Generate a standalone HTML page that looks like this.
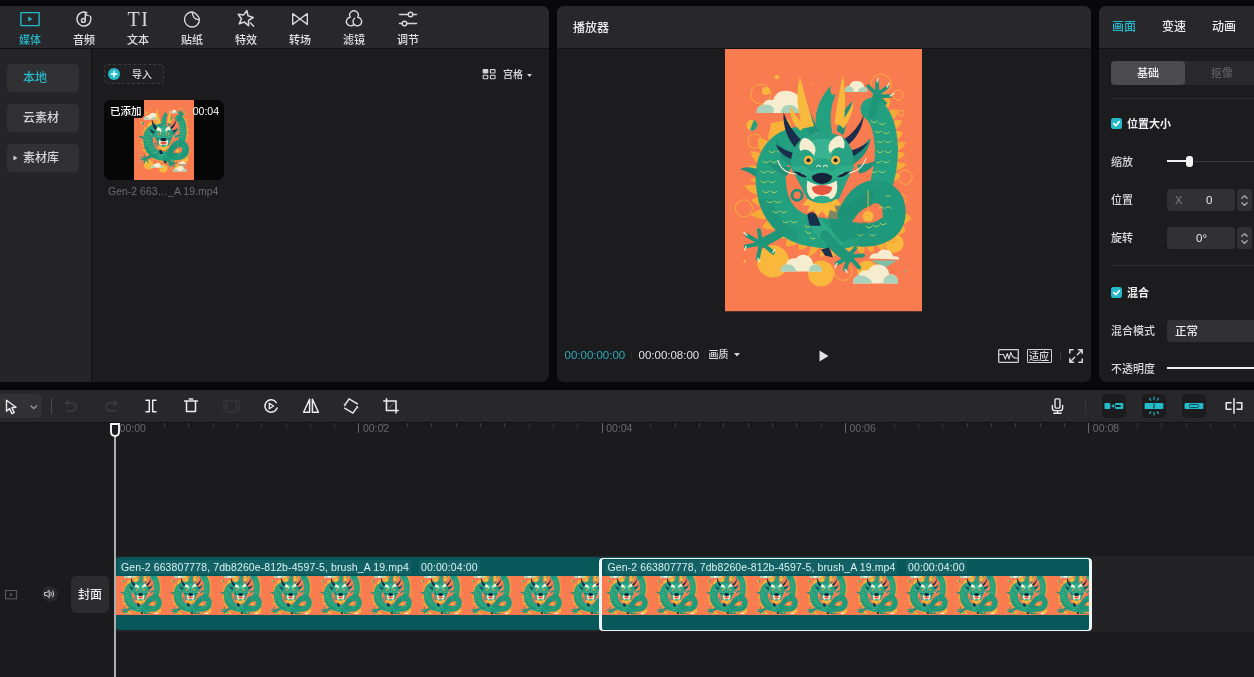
<!DOCTYPE html>
<html lang="zh-CN">
<head>
<meta charset="utf-8">
<title>剪映</title>
<style>
*{box-sizing:border-box;margin:0;padding:0}
html,body{width:1254px;height:677px;overflow:hidden;background:#08080a}
body{position:relative;font-family:"Liberation Sans","Noto Sans CJK SC",sans-serif;color:#e6e6e8;font-size:12px;font-weight:500;-webkit-font-smoothing:antialiased}
.abs{position:absolute}
.panel{position:absolute;top:6px;height:376px;background:#1c1c1e;overflow:hidden}
.phead{position:absolute;left:0;right:0;top:0;height:43px;background:#28272b;border-bottom:1px solid #111113}
svg{display:block;overflow:visible}
.ico{position:absolute;fill:none;stroke:#dcdcde;stroke-width:1.4;stroke-linecap:round;stroke-linejoin:round}
.t{position:absolute;white-space:nowrap;line-height:1}
/* left panel */
#left{left:0;width:548.700px;border-radius:0 7px 7px 0}
.tab{position:absolute;top:0;width:54px;height:42px}
.tab .lbl{position:absolute;left:0;right:0;top:28px;text-align:center;font-size:11px;line-height:12px;color:#e0e0e2}
.tab svg{position:absolute;left:16px;top:2px;width:22px;height:22px;fill:none;stroke:#d8d8da;stroke-width:1.4;stroke-linecap:round;stroke-linejoin:round}
.tab.on .lbl{color:#25b9c9}
.tab.on svg{stroke:#25b9c9}
#side{position:absolute;left:0;top:43px;width:92px;bottom:0;background:#252527;border-right:1px solid #111113}
.sbtn{position:absolute;left:7px;width:72px;height:28px;border-radius:5px;background:#313134;font-size:12px;line-height:29px;color:#d6d6d8;text-align:center}
/* player */
#player{left:556.500px;width:534.200px;border-radius:7px}
/* right */
#right{left:1099px;width:160px;border-radius:7px 0 0 7px}
.rl{position:absolute;left:12px;font-size:11px;line-height:14px;color:#dadadc;white-space:nowrap}
.inp{position:absolute;background:#313135;border-radius:4px}
.chk{position:absolute;left:12px;width:11px;height:11px;border-radius:2.5px;background:#25b9c9}
.chk svg{width:11px;height:11px;fill:none;stroke:#fff;stroke-width:1.6;stroke-linecap:round;stroke-linejoin:round}
/* timeline */
#tbar{position:absolute;z-index:2;left:0;top:390px;width:1254px;height:33px;background:#28272b;border-bottom:1px solid #121214}
#tl{position:absolute;left:0;top:422px;width:1254px;height:255px;background:#1b1b1d;overflow:hidden}
.tick{position:absolute;top:1px;width:1px;height:4px;background:#3c3c40}
.maj{position:absolute;top:1px;width:1px;height:10px;background:#6a6a6e}
.rt{position:absolute;top:0px;font-size:10.5px;line-height:12px;color:#68686c}
.clip{position:absolute;top:135px;height:73px;background:#08575b;overflow:hidden}
.clbl{position:absolute;top:3px;height:14px;line-height:14.5px;font-size:10.5px;letter-spacing:.1px;color:#d8f2f2;background:#136165;padding:0 2px;white-space:nowrap;border-radius:1.5px}
.strip{position:absolute;left:0;right:0;top:19px;height:38.500px;background:#f57a4e}
</style>
</head>
<body>
<div id="root" style="position:absolute;left:0;top:0;width:1254px;height:677px;will-change:transform">
<svg width="0" height="0" style="position:absolute">
<defs>
<symbol id="dragon" viewBox="0 0 197 262" preserveAspectRatio="xMidYMid slice">
<rect width="197" height="262" fill="#f87c50"/>
<!-- thin rings -->
<g fill="none" stroke="#f7b43c" stroke-width="0.9">
<circle cx="36" cy="45" r="10"/><circle cx="156" cy="35" r="10"/><circle cx="173" cy="46" r="5"/><circle cx="176" cy="64" r="3"/>
<circle cx="19" cy="159" r="8.5"/><circle cx="30" cy="92" r="7"/><circle cx="180" cy="128" r="7"/><circle cx="118" cy="222" r="9"/><circle cx="176" cy="150" r="5"/>
</g>
<!-- yellow discs -->
<g fill="#f9b83c">
<circle cx="41" cy="42" r="4"/><circle cx="52" cy="28" r="2.4"/><circle cx="27" cy="76" r="5.5"/>
<circle cx="48" cy="212" r="16"/><circle cx="96" cy="224" r="13"/><circle cx="169" cy="194" r="9.5"/><circle cx="142" cy="221" r="10"/>
<circle cx="20" cy="212" r="1.3"/><circle cx="88" cy="35" r="0.8"/>
</g>
<path d="M21.500 76 A5.500 5.500 0 0 0 32.500 76Z" fill="#2a9f80" transform="rotate(-70 27 76)"/>
<!-- yellow mane behind body -->
<path d="M67.1 78.4 Q66.1 72.3 61.4 70.3 Q54.1 77.9 56.6 82.4Z M54.5 83.6 Q51.8 78.4 45.8 79.2 Q41.0 89.0 44.8 92.1Z M44.0 93.1 Q38.8 88.4 33.1 89.3 Q32.7 101.3 38.0 103.5Z M37.5 104.9 Q30.5 101.8 25.5 102.1 Q28.8 113.2 34.9 114.3Z M34.4 117.1 Q27.3 115.6 22.8 116.6 Q27.8 126.0 33.8 126.1Z M33.8 128.9 Q27.9 128.5 25.0 130.9 Q29.0 133.1 34.0 132.9Z M34.2 135.5 Q25.3 135.6 19.4 136.5 Q28.5 146.7 35.4 145.4Z M35.8 147.1 Q29.4 147.9 26.6 151.0 Q33.3 157.9 38.3 156.1Z M39.3 158.6 Q30.5 161.6 24.9 165.2 Q38.2 172.6 44.5 168.6Z M45.1 169.6 Q38.9 173.1 37.3 178.1 Q48.3 182.5 52.4 178.3Z M53.4 179.2 Q49.1 183.1 51.2 188.4 Q61.1 190.9 63.5 186.6Z M63.6 186.7 Q59.9 192.3 61.5 197.3 Q72.7 196.8 74.5 191.5Z M74.9 191.7 Q72.6 197.2 74.4 200.9 Q83.1 199.0 84.0 194.0Z M86.5 194.4 Q84.7 203.0 82.4 208.3 Q93.9 202.5 94.9 195.6Z M96.7 195.8 Q95.2 203.5 94.9 208.4 Q104.6 203.0 105.1 196.7Z M107.3 196.8 Q106.3 203.8 107.3 207.8 Q116.2 203.1 116.5 197.4Z M117.4 197.4 Q116.6 203.1 118.6 206.0 Q125.8 202.8 126.1 197.9Z" fill="#f6ad38"/>
<path d="M156.0 52.0 Q159.8 47.7 164.8 49.4 Q165.9 57.5 161.6 59.8Z M162.8 62.2 Q168.4 59.1 172.8 61.1 Q171.3 70.0 166.3 71.5Z M166.5 72.3 Q172.9 70.1 177.1 71.3 Q173.9 79.7 168.3 80.7Z M168.6 82.4 Q174.4 81.1 177.7 83.5 Q174.6 90.8 169.6 91.1Z M169.7 92.5 Q176.8 91.7 181.0 93.8 Q175.7 102.2 169.9 102.1Z M169.9 102.6 Q176.6 102.4 180.3 104.3 Q174.9 111.3 169.4 110.7Z M169.2 112.6 Q176.8 113.1 181.2 115.2 Q174.0 122.6 167.8 121.4Z M167.6 122.6 Q173.4 123.4 175.6 127.1 Q170.1 133.2 165.3 131.8Z" fill="#f6ad38"/>
<path d="M122.5 194.4 Q121.9 199.1 127.3 201.7 Q131.4 199.7 131.6 195.5Z M131.7 195.5 Q131.6 201.9 137.6 205.5 Q140.0 201.0 139.7 195.6Z M141.1 195.5 Q141.8 201.2 147.6 203.3 Q149.6 199.3 148.7 194.5Z M150.7 194.1 Q152.5 200.0 159.1 201.4 Q160.2 196.5 158.1 191.7Z M160.4 190.6 Q163.3 195.7 171.4 194.2 Q172.5 188.1 168.9 184.5Z M169.4 184.0 Q173.4 187.4 180.1 182.4 Q179.8 176.1 175.5 174.4Z M175.6 174.1 Q181.3 175.8 186.1 168.7 Q182.6 163.9 177.5 163.8Z" fill="#f6ad38"/>

<path d="M46 74 L64 70 L70 92 L44 96Z" fill="#f8b23a"/>
<!-- clouds back -->
<g id="cl1">
<path d="M32 64 Q31 57 38 56 Q40 49 48 51 Q52 40 64 42 Q76 44 76 56 Q80 58 78 64Z" fill="#f6edd0"/>
<path d="M32 64 Q31 57 38 56 Q44 54 48 58 Q50 62 48 64Z" fill="#a9d2bd"/>
<path d="M56 64 Q56 57 63 56 Q70 55 72 60 Q76 60 76 64Z" fill="#a9d2bd"/>
</g>
<path d="M120 43 Q119 38 124 37 Q126 31 133 32 Q139 33 139 38 Q143 38 142 43Z" fill="#f6edd0"/>
<path d="M120 43 Q119 38 124 37 Q129 38 129 43Z M133 43 Q133 39 138 38 Q143 38 142 43Z" fill="#a9d2bd"/>
<!-- right upper body arc + arm -->
<g fill="none" stroke-linecap="round" stroke-linejoin="round">
<path d="M147 60 C160 68 166 100 157 132" stroke="#23a07f" stroke-width="23"/>
<path d="M147 66 C150 58 151 52 152 44" stroke="#1f967a" stroke-width="8"/>
<path d="M152 46 L143 37 M152 45 L152 33 M153 45 L162 38 M153 47 L165 47 M152 47 L160 54" stroke="#1f967a" stroke-width="3.600"/>
<path d="M162 38 L164 34 M165 47 L169 44 M152 33 L153 29" stroke="#f6edd0" stroke-width="1.200"/>
</g>
<!-- lower right loop -->
<g fill="none" stroke-linecap="round" stroke-linejoin="round">
<path d="M118 184 C146 189 169 184 169 163 C169 146 156 141 146 143 C138 145 130 152 124 166" stroke="#1f997b" stroke-width="23"/>
<path d="M46 132 C47 160 62 180 92 183 C104 185 112 185 120 184" stroke="#23a07f" stroke-width="30"/>
<path d="M78 92 C56 94 44 108 46 134" stroke="#23a07f" stroke-width="30"/>
</g>
<!-- body shading -->
<path d="M100 160 L132 150 L150 140 L140 186 L112 194 Z" fill="#1a8c72" opacity=".55"/>
<path d="M96 170 L120 196 L100 196 L84 176Z" fill="#34b08c" opacity=".6"/>
<path d="M33 120 Q22 116 15 120 Q24 122 31 128Z" fill="#1f917a"/>
<path d="M47 150 Q52 172 74 182 L70 192 Q42 180 33 150Z" fill="#1c8f74" opacity=".5"/>
<!-- teardrop hole + lantern -->
<path d="M127 173 Q136 157 148 157 Q158 159 158 168 Q150 174 127 173Z" fill="#f87c50"/>
<path d="M143 141 V163" stroke="#f6b63a" stroke-width="0.9"/>
<circle cx="143" cy="167" r="5.500" fill="#f9b83c"/>
<!-- scales -->
<g fill="none" stroke="#b9d35b" stroke-width="0.9" stroke-linecap="round">
<path d="M38 112 q3 3 6 0 m2 0 q3 3 6 0 M36 122 q3 3 6 0 m2 0 q3 3 6 0 m2 0 q3 3 6 0 M36 132 q3 3 6 0 m2 0 q3 3 6 0 M38 142 q3 3 6 0 m2 0 q3 3 6 0 M42 152 q3 3 6 0 m2 0 q3 3 6 0 M48 162 q3 3 6 0 m2 0 q3 3 6 0 M58 172 q3 3 6 0 m2 0 q3 3 6 0 M44 102 q3 3 6 0 m2 0 q3 3 6 0 M80 176 q2 4 5 1 m-4 5 q2 4 5 1 m-1 5 q2 3 5 1"/>
<path transform="translate(-6 0)" d="M152 72 q3 3 6 0 m2 2 q3 3 6 0 M156 82 q3 3 6 0 m2 1 q3 3 6 0 M158 92 q3 3 6 0 m2 0 q3 3 6 0 M158 102 q3 3 6 0 m2 0 q3 3 6 0 M156 112 q3 3 6 0 m2 0 q3 3 6 0 M152 122 q3 3 6 0 m2 0 q3 3 6 0"/>
<path transform="translate(-7 -1)" d="M160 160 q3 -3 6 0 m1 0 q3 -3 6 0 M148 178 q3 3 6 0 m1 -1 q3 3 6 0 m1 -2 q3 3 6 0 M140 186 q2 3 5 0 M152 186 q2 3 5 0 M168 148 q2 -2 4 0"/>
</g>
<!-- legs -->
<g fill="none" stroke="#1f967a" stroke-linecap="round" stroke-linejoin="round">
<path d="M62 180 C52 186 44 190 36 194" stroke-width="9"/>
<path d="M36 194 L22 186 M36 194 L21 197 M36 195 L33 209 M37 194 L48 203 M36 193 L34 181" stroke-width="4"/>
<path d="M100 186 C108 196 116 204 124 208" stroke-width="10"/>
<path d="M124 208 L112 214 M124 208 L120 220 M125 208 L134 218 M125 207 L138 206 M124 207 L130 199" stroke-width="4"/>
</g>
<g stroke="#f6edd0" stroke-width="1.300" stroke-linecap="round"><path d="M22 186 L19 183 M21 197 L20 201 M33 209 L35 212 M48 203 L50 200 M112 214 L110 218 M120 220 L122 223"/></g>
<path d="M96 200 L104 198 L108 208 L100 206Z" fill="#18304c"/>
<!-- front clouds -->
<path d="M56 222 Q55 216 61 215 Q63 208 71 209 Q76 203 84 207 Q88 210 88 215 Q96 214 97 222Z" fill="#f6edd0"/>
<path d="M56 222 Q55 216 61 215 Q68 214 72 222Z M84 222 Q84 216 90 215 Q97 215 97 222Z" fill="#a9d2bd"/>
<path d="M144 209 Q146 203 152 204 Q156 198 164 201 Q168 204 168 207 Q174 206 174 210Z" fill="#f6edd0"/>
<path d="M146 211 L172 211 L160 218Z" fill="#7fbfa8"/>
<path d="M128 234 Q127 228 133 226 Q136 220 143 221 Q148 213 158 216 Q164 219 164 225 Q173 224 173 234Z" fill="#f6edd0"/>
<path d="M128 234 Q127 228 133 226 Q142 225 148 234Z M158 234 Q158 226 165 225 Q173 225 173 234Z" fill="#a9d2bd"/>
<g transform="translate(97 120) scale(1.130) translate(-97 -120)">
<!-- HEAD -->
<!-- green mane tufts -->
<path d="M92 88 Q88 64 105 46 Q103 56 109 54 Q102 70 106 88Z" fill="#23a07f"/>
<path d="M86 90 Q78 74 82 58 Q86 70 94 86Z M110 86 Q112 70 124 60 Q120 74 116 90Z" fill="#1f917a"/>
<path d="M70 118 Q58 110 56 94 Q64 104 74 106Z M124 116 Q138 108 140 92 Q132 102 122 104Z M66 126 Q56 124 50 114 Q60 118 70 118Z M130 124 Q140 122 146 112 Q136 116 128 116Z" fill="#1f917a"/>
<!-- navy fins -->
<path d="M76 104 Q62 90 63 70 Q68 84 80 96Z M118 100 Q132 90 134 72 Q128 86 116 94Z" fill="#1b2d4d"/>
<path d="M72 112 Q60 108 56 98 Q64 104 74 106Z M122 110 Q134 104 138 96 Q130 102 120 104Z" fill="#1b2d4d"/>
<!-- horns -->
<path d="M80 84 Q72 58 77.500 38 Q82 56 90 82Z M108 80 Q111 56 115.600 37 Q119 58 116 82Z" fill="#f8b93d"/>
<path d="M78 86 Q68 78 69 64 Q74 74 82 82Z M116 84 Q124 74 125 60 Q120 72 112 80Z" fill="#f8b93d"/>
<!-- face -->
<path d="M78 94 Q97 82 116 92 Q128 104 124 120 Q118 132 112 146 Q97 154 84 146 Q76 130 70 120 Q68 104 78 94Z" fill="#27a283"/>
<path d="M84 96 Q97 90 110 96 L104 112 Q97 108 90 112Z" fill="#38b291"/>
<!-- brows -->
<path d="M78 96 Q80 90 86 94 Q94 100 90 108 Q84 100 78 104 Q76 100 78 96Z M116 94 Q114 88 108 92 Q100 98 104 106 Q110 98 116 102 Q118 98 116 94Z" fill="#f6edd0"/>
<!-- eyes -->
<circle cx="85" cy="112" r="4" fill="#f8b93d"/><circle cx="85" cy="112" r="1.800" fill="#18243c"/>
<circle cx="109" cy="112" r="4" fill="#f8b93d"/><circle cx="109" cy="112" r="1.800" fill="#18243c"/>
<!-- cheeks/whisker outline -->
<path d="M70 118 Q80 114 88 122 Q97 118 106 122 Q114 114 126 118 Q120 126 112 128 L84 128 Q76 126 70 118Z" fill="#2fae8c"/>
<path d="M58 112 Q62 126 80 124 M136 110 Q132 124 114 124" fill="none" stroke="#f6edd0" stroke-width="1"/>
<path d="M92 118 q2 -3 4 0 m2 0 q2 -3 4 0" fill="none" stroke="#f6edd0" stroke-width="1"/>
<!-- nose -->
<path d="M88 126 Q97 120 106 126 Q106 132 97 133 Q88 132 88 126Z" fill="#16233b"/>
<path d="M72 122 Q78 122 84 127 Q78 128 72 122Z M122 122 Q116 122 110 127 Q116 128 122 122Z" fill="#16233b"/>
<!-- mouth -->
<path d="M84 130 Q97 138 110 130 Q112 142 106 146 Q97 148 88 146 Q82 142 84 130Z" fill="#f6edd0"/>
<path d="M88 136 Q97 132 106 136 Q106 142 97 143 Q88 142 88 136Z" fill="#e8553e"/>
<path d="M90 145 Q97 142 104 145 L102 152 Q97 154 92 152Z" fill="#2fae8c"/>
<!-- beard -->
<path d="M84 146 L80 152 L86 152 L84 158 L90 156 L92 163 L97 157 L102 163 L104 156 L110 158 L108 152 L114 152 L110 146 Q97 154 84 146Z" fill="#f8b93d"/>
<path d="M84 160 Q88 156 92 160 L96 170 L86 170Z" fill="#18304c"/>
<circle cx="75" cy="143" r="4.500" fill="none" stroke="#1f917a" stroke-width="2.500"/>
</g>
<circle cx="180" cy="222" r="0.900" fill="#7fbfa8"/>
</symbol>
</defs>
</svg>

<svg class="abs" style="left:725px;top:49px;z-index:5" width="197" height="262.500" preserveAspectRatio="none"><use href="#dragon"/></svg>

<!-- ============ LEFT PANEL ============ -->
<div class="panel" id="left">
  <div class="phead" id="tabs">
    <div class="tab on" style="left:3px"><svg viewBox="0 0 22 22"><rect x="1.900" y="4.600" width="18.200" height="13" stroke-width="1.400"/><path d="M9.300 8.600 L13.400 11 L9.300 13.400Z" fill="#25b9c9" stroke="none"/></svg><div class="lbl">媒体</div></div>
    <div class="tab" style="left:57px"><svg viewBox="0 0 22 22"><path d="M13.800 4.600 A7 7 0 1 0 17.400 8.200"/><circle cx="10.400" cy="12.400" r="1.900"/><path d="M12.300 12.400 V5.400 Q13.200 7.400 15.400 7.600"/></svg><div class="lbl">音频</div></div>
    <div class="tab" style="left:111px"><div class="t" style="left:0;width:54px;top:3px;text-align:center;font-family:'Liberation Serif',serif;font-size:20px;line-height:20px;letter-spacing:1.500px;color:#d8d8da;text-indent:1px">TI</div><div class="lbl">文本</div></div>
    <div class="tab" style="left:165px"><svg viewBox="0 0 22 22"><path d="M11.500 4 A7.600 7.600 0 1 0 18.600 11.200 Z" stroke="none"/><path d="M11.400 4 A7.500 7.500 0 1 0 18.500 11.600 C14 12 11 8.500 11.400 4 C14 4.500 18 8 18.500 11.600"/></svg><div class="lbl">贴纸</div></div>
    <div class="tab" style="left:219px"><svg viewBox="0 0 22 22"><path d="M10.300 3.200 L12.300 7.600 L17.100 8.100 L13.600 11.400 L14.600 16.100 L10.300 13.700 L6.100 16.100 L7.100 11.400 L3.500 8.100 L8.300 7.600Z" transform="rotate(12 10.300 10) translate(10.300 10) scale(1.120) translate(-10.300 -10)"/><path d="M15.600 15 L18.600 18.200"/></svg><div class="lbl">特效</div></div>
    <div class="tab" style="left:273px"><svg viewBox="0 0 22 22"><path d="M3.700 5.600 L11 11 L3.700 16.400Z M18.300 5.600 L11 11 L18.300 16.400Z"/></svg><div class="lbl">转场</div></div>
    <div class="tab" style="left:327px"><svg viewBox="0 0 22 22"><path d="M7.300 9.300 A4.300 4.300 0 1 1 14.700 9.300 A4.300 4.300 0 1 1 11 16.300 A4.300 4.300 0 1 1 7.300 9.300 M11 16.300 A4.300 4.300 0 0 1 11.600 10.200"/></svg><div class="lbl">滤镜</div></div>
    <div class="tab" style="left:381px"><svg viewBox="0 0 22 22"><path d="M2.500 6.500 H11.200 M15.800 6.500 H19.500 M2.500 15.500 H5.200 M9.800 15.500 H19.500"/><circle cx="13.500" cy="6.500" r="2.300"/><circle cx="7.500" cy="15.500" r="2.300"/></svg><div class="lbl">调节</div></div>
  </div>
  <div id="side">
    <div class="sbtn" style="top:15px;color:#25b9c9;padding-right:16px">本地</div>
    <div class="sbtn" style="top:55px;padding-right:4px">云素材</div>
    <div class="sbtn" style="top:95px;padding-right:4px">素材库<svg style="position:absolute;left:6px;top:11px" width="5" height="6" viewBox="0 0 5 6"><path d="M0.500 0.500 L4.500 3 L0.500 5.500Z" fill="#d0d0d2"/></svg></div>
  </div>
  <div id="media">
    <div class="abs" style="left:104px;top:58px;width:60px;height:20px;border:1px dashed #3a3a3e;border-radius:4px;background:#202022"></div>
    <svg class="abs" style="left:108px;top:62px" width="12" height="12" viewBox="0 0 12 12"><circle cx="6" cy="6" r="6" fill="#25b9c9"/><path d="M6 3.200 V8.800 M3.200 6 H8.800" stroke="#fff" stroke-width="1.400" stroke-linecap="round"/></svg>
    <div class="t" style="left:132px;top:63.500px;font-size:10px;color:#dcdcde">导入</div>
    <svg class="abs" style="left:482px;top:63px" width="14.600" height="10.500" viewBox="0 0 14 11" fill="none" stroke="#d4d4d6" stroke-width="1.200"><rect x="0.600" y="0.600" width="4.800" height="3.600" rx="0.600" fill="#d4d4d6"/><rect x="8.200" y="0.600" width="4.800" height="3.600" rx="0.600"/><rect x="0.600" y="6.600" width="4.800" height="3.600" rx="0.600"/><rect x="8.200" y="6.600" width="4.800" height="3.600" rx="0.600"/></svg>
    <div class="t" style="left:503px;top:64px;font-size:10px;color:#dcdcde">宫格</div>
    <svg class="abs" style="left:527px;top:67.500px" width="5" height="3.300" viewBox="0 0 6 4"><path d="M0 0 H6 L3 3.500Z" fill="#d0d0d2"/></svg>
    <div class="abs" style="left:104px;top:94px;width:120px;height:80px;border-radius:7px;background:#060607;overflow:hidden">
      <svg class="abs" style="left:30px;top:0" width="60" height="80"><use href="#dragon" width="60" height="80"/></svg>
      <div class="abs" style="left:0;top:0;width:39.500px;height:17.500px;background:#0a0a0b;border-radius:0 0 4px 0"></div>
      <div class="t" style="left:6px;top:5.500px;font-size:10.500px;color:#fff">已添加</div>
      <div class="t" style="right:5px;top:6px;font-size:10.500px;color:#fff">00:04</div>
    </div>
    <div class="t" style="left:108px;top:180px;font-size:10.500px;color:#6a6a6e">Gen-2 663…_A 19.mp4</div>
  </div>
</div>

<!-- ============ PLAYER ============ -->
<div class="panel" id="player">
  <div class="phead"><div class="t" style="left:16.500px;top:16px;font-size:12px;color:#ececee">播放器</div></div>
  <div class="t" style="left:8px;top:344px;font-size:11.500px;color:#25aab9">00:00:00:00</div>
  <div class="abs" style="left:74px;top:344px;width:1px;height:12px;background:#29292c"></div>
  <div class="t" style="left:82px;top:344px;font-size:11.500px;color:#e2e2e4">00:00:08:00</div>
  <div class="abs" style="left:147px;top:344px;width:1px;height:12px;background:#29292c"></div>
  <div class="t" style="left:152px;top:344px;font-size:10px;color:#dedee0">画质</div>
  <svg class="abs" style="left:177px;top:347px" width="6" height="4" viewBox="0 0 6 4"><path d="M0 0 H6 L3 3.500Z" fill="#d6d6d8"/></svg>
  <svg class="abs" style="left:262px;top:344px" width="10" height="12" viewBox="0 0 10 12"><path d="M0.500 0.500 L9.500 6 L0.500 11.500Z" fill="#e2e2e4"/></svg>
  <svg class="abs" style="left:441px;top:343px" width="21" height="14" viewBox="0 0 21 14" fill="none" stroke="#d2d2d4" stroke-width="1.300" stroke-linejoin="round"><rect x="0.700" y="0.700" width="19.600" height="12.600" rx="0.500"/><path d="M1 5.500 H5.500 L7.300 10 L9.300 4.500 L11 10 L12.800 3.500 L14.500 7.500 Q16.500 9.500 20 9.200" stroke-width="1.100"/></svg>
  <div class="abs" style="left:470px;top:343px;width:25px;height:14px;border:1.300px solid #d2d2d4;border-radius:1px"></div>
  <div class="t" style="left:472.500px;top:346px;font-size:10px;color:#e0e0e2;font-weight:500">适应</div>
  <div class="abs" style="left:503px;top:346px;width:1px;height:9px;background:#3a3a3d"></div>
  <svg class="abs" style="left:512px;top:343px" width="14" height="14" viewBox="0 0 14 14" fill="none" stroke="#d6d6d8" stroke-width="1.500" stroke-linecap="round" stroke-linejoin="round"><path d="M0.800 4 V0.800 H4 M0.800 9.500 V13.200 H4.500 M13.200 10 V13.200 H10 M9.500 0.800 H13.200 V4.500 M13.200 0.800 L8.300 5.700 M0.800 13.200 L5.700 8.300" /></svg>
</div>

<!-- ============ RIGHT PANEL ============ -->
<div class="panel" id="right">
  <div class="phead">
    <div class="t" style="left:13px;top:15px;font-size:12px;color:#25b9c9">画面</div>
    <div class="t" style="left:63px;top:15px;font-size:12px;color:#ececee">变速</div>
    <div class="t" style="left:113px;top:15px;font-size:12px;color:#ececee">动画</div>
  </div>
  <div class="abs" style="left:12px;top:55px;width:148px;height:24px;border-radius:4px;background:#29292c"></div>
  <div class="abs" style="left:12px;top:55px;width:74px;height:24px;border-radius:4px;background:#4b4b4f"></div>
  <div class="t" style="left:12px;width:74px;text-align:center;top:62px;font-size:11px;color:#f0f0f2">基础</div>
  <div class="t" style="left:86px;width:74px;text-align:center;top:62px;font-size:11px;color:#5e5e62">抠像</div>
  <div class="abs" style="left:12px;top:92px;width:148px;height:1px;background:#2e2e31"></div>
  <div class="chk" style="top:112px"><svg viewBox="0 0 11 11"><path d="M2.800 5.600 L4.800 7.600 L8.300 3.600"/></svg></div>
  <div class="t" style="left:28px;top:113px;font-size:11px;font-weight:700;color:#f0f0f2">位置大小</div>
  <div class="rl" style="top:149px">缩放</div>
  <div class="abs" style="left:68px;top:154.500px;width:92px;height:1.500px;background:#3a3a3e"></div>
  <div class="abs" style="left:68px;top:154px;width:22px;height:2px;background:#f0f0f2"></div>
  <div class="abs" style="left:86.500px;top:149.500px;width:7px;height:11px;border-radius:3px;background:#f2f2f4"></div>
  <div class="rl" style="top:187px">位置</div>
  <div class="inp" style="left:68px;top:183px;width:68px;height:22px"></div>
  <div class="t" style="left:76px;top:189px;font-size:11px;color:#808085">X</div>
  <div class="t" style="left:107px;top:189px;font-size:11.500px;color:#e8e8ea">0</div>
  <div class="inp" style="left:138px;top:183px;width:15px;height:22px;border-radius:3px"></div>
  <svg class="abs" style="left:142px;top:187.500px" width="7" height="13" viewBox="0 0 7 13" fill="none" stroke="#b4b4b8" stroke-width="1.250" stroke-linecap="round" stroke-linejoin="round"><path d="M0.800 4.200 L3.500 1.600 L6.200 4.200 M0.800 8.800 L3.500 11.400 L6.200 8.800"/></svg>
  <div class="rl" style="top:225px">旋转</div>
  <div class="inp" style="left:68px;top:221px;width:68px;height:22px"></div>
  <div class="t" style="left:97px;top:227px;font-size:11.500px;color:#e8e8ea">0°</div>
  <div class="inp" style="left:138px;top:221px;width:15px;height:22px;border-radius:3px"></div>
  <svg class="abs" style="left:142px;top:225.500px" width="7" height="13" viewBox="0 0 7 13" fill="none" stroke="#b4b4b8" stroke-width="1.250" stroke-linecap="round" stroke-linejoin="round"><path d="M0.800 4.200 L3.500 1.600 L6.200 4.200 M0.800 8.800 L3.500 11.400 L6.200 8.800"/></svg>
  <div class="abs" style="left:12px;top:259px;width:148px;height:1px;background:#2e2e31"></div>
  <div class="chk" style="top:281px"><svg viewBox="0 0 11 11"><path d="M2.800 5.600 L4.800 7.600 L8.300 3.600"/></svg></div>
  <div class="t" style="left:28px;top:282px;font-size:11px;font-weight:700;color:#f0f0f2">混合</div>
  <div class="rl" style="top:318px">混合模式</div>
  <div class="inp" style="left:68px;top:314px;width:100px;height:22px"></div>
  <div class="t" style="left:76px;top:320px;font-size:11.500px;color:#e8e8ea">正常</div>
  <div class="rl" style="top:356px">不透明度</div>
  <div class="abs" style="left:68px;top:361px;width:100px;height:2px;background:#f0f0f2"></div>
</div>

<!-- ============ TIMELINE ============ -->
<div id="tbar">
  <div class="abs" style="left:-4px;top:4px;width:46px;height:24px;border-radius:5px;background:#323235"></div>
  <svg class="abs" style="left:4.500px;top:8.500px" width="14" height="16" viewBox="0 0 14 16" fill="none" stroke="#ececee" stroke-width="1.500" stroke-linecap="round" stroke-linejoin="round" stroke-width="1.400"><path d="M1.500 1.200 L1.500 12.200 L4.600 9.600 L6.900 14.600 L9.200 13.600 L6.900 8.700 L11 8.300 Z" stroke-width="1.400"/></svg>
  <svg class="abs" style="left:30px;top:14.500px" width="7.500" height="5" viewBox="0 0 9 6" fill="none" stroke="#a2a2a6" stroke-width="1.500" stroke-linecap="round" stroke-linejoin="round"><path d="M1.200 1.200 L4.500 4.400 L7.800 1.200"/></svg>
  <div class="abs" style="left:51px;top:8px;width:1px;height:16px;background:#48484c"></div>
  <svg class="abs" style="left:64px;top:9px" width="14" height="14" viewBox="0 0 14 14" fill="none" stroke="#3d3d41" stroke-width="1.500" stroke-linecap="round" stroke-linejoin="round"><path d="M3.800 1.800 L1.500 4.200 L3.800 6.600 M1.800 4.200 H8.400 A3.800 3.800 0 0 1 8.400 11.800 H2.500"/></svg>
  <svg class="abs" style="left:104px;top:9px" width="14" height="14" viewBox="0 0 14 14" fill="none" stroke="#3d3d41" stroke-width="1.500" stroke-linecap="round" stroke-linejoin="round"><path d="M10.200 1.800 L12.500 4.200 L10.200 6.600 M12.200 4.200 H5.600 A3.800 3.800 0 0 0 5.600 11.800 H11.500"/></svg>
  <svg class="abs" style="left:144px;top:8px" width="14" height="16" viewBox="0 0 14 16" fill="none" stroke="#ececee" stroke-width="1.500" stroke-linecap="round" stroke-linejoin="round" stroke-width="1.450" stroke-linecap="butt" stroke-linejoin="miter"><path d="M2 2.200 H5.300 V13.800 H2 M12 2.200 H8.700 V13.800 H12"/></svg>
  <svg class="abs" style="left:183px;top:7px" width="16" height="17" viewBox="0 0 16 17" fill="none" stroke="#ececee" stroke-width="1.500" stroke-linecap="round" stroke-linejoin="round" stroke-width="1.600" stroke-linejoin="miter" stroke-linecap="butt"><path d="M1.500 4 H14.500 M6.300 2 H9.700 M3.500 4 V14.600 H12.500 V4"/></svg>
  <svg class="abs" style="left:223px;top:9px" width="17" height="14" viewBox="0 0 17 14" fill="none" stroke="#37373a" stroke-width="1.400"><path d="M1 1 V13 M16 1 V13"/><rect x="3.800" y="1.200" width="9.400" height="11.600"/></svg>
  <svg class="abs" style="left:263px;top:8px" width="16" height="16" viewBox="0 0 16 16" fill="none" stroke="#ececee" stroke-width="1.500" stroke-linecap="round" stroke-linejoin="round" stroke-width="1.500"><path d="M13.300 4.600 A6.200 6.200 0 1 0 14 9.900"/><path d="M6.300 5.200 L10.600 8 L6.300 10.800Z" stroke-width="1.300"/></svg>
  <svg class="abs" style="left:302px;top:8px" width="18" height="16" viewBox="0 0 18 16" fill="none" stroke="#ececee" stroke-width="1.500" stroke-linecap="round" stroke-linejoin="round" stroke-width="1.400" stroke-linejoin="miter"><path d="M7.600 1.200 V14.200 H1.600 Z M10.400 1.200 V14.200 H16.400 Z"/></svg>
  <svg class="abs" style="left:342px;top:7px" width="18" height="18" viewBox="0 0 18 18" fill="none" stroke="#ececee" stroke-width="1.500" stroke-linecap="round" stroke-linejoin="round" stroke-width="1.500"><path d="M3.300 7.200 L7.100 1.900 L15.900 7.200 M2.200 10.800 L10.800 16.100 L14.800 10.600" stroke-linejoin="miter" stroke-linecap="butt"/><path d="M1.600 6.400 L4.600 8.100 L2.400 9.200Z M16.500 11.600 L13.500 9.900 L15.700 8.800Z" fill="#ececee" stroke="none"/></svg>
  <svg class="abs" style="left:383px;top:8px" width="16" height="16" viewBox="0 0 16 16" fill="none" stroke="#ececee" stroke-width="1.600" stroke-linecap="butt" stroke-linejoin="miter"><path d="M3.500 0.200 V12.500 H15.800 M0.200 3 H13 V15.500"/><path d="M5.800 10.300 L10.800 5.200" stroke-width="0.900" stroke="#a0a0a4" stroke-dasharray="1.200 0.800"/></svg>

  <svg class="abs" style="left:1050.500px;top:8px" width="13" height="16.500" viewBox="0 0 14 18" fill="none" stroke="#ececee" stroke-width="1.500" stroke-linecap="round" stroke-linejoin="round" stroke-width="1.400"><rect x="4.300" y="1" width="5.400" height="10" rx="1.200"/><path d="M1.400 8 V11.200 Q1.400 13.800 4 13.800 H10 Q12.600 13.800 12.600 11.200 V8 M7 13.800 V16.400 M3 16.600 H11"/></svg>
  <div class="abs" style="left:1085px;top:10px;width:1px;height:12px;background:#38383b"></div>
  <div class="abs" style="left:1102px;top:4px;width:24px;height:24px;border-radius:4px;background:#1c1c1e"></div>
  <div class="abs" style="left:1142px;top:4px;width:24px;height:24px;border-radius:4px;background:#1c1c1e"></div>
  <div class="abs" style="left:1182px;top:4px;width:24px;height:24px;border-radius:4px;background:#1c1c1e"></div>
  <svg class="abs" style="left:1104px;top:12px" width="20" height="8" viewBox="0 0 20 8"><rect x="0.500" y="1" width="5.800" height="6" rx="0.800" fill="#22bccb"/><path d="M12 1 H18.500 Q19.300 1 19.300 1.800 V6.200 Q19.300 7 18.500 7 H12 Q11.200 7 11.200 6.200 V5 H16.600 V3 H11.200 V1.800 Q11.200 1 12 1Z" fill="#22bccb"/><path d="M7.200 4 L9.800 2 V6Z M9 3.400 H12 V4.600 H9Z" fill="#22bccb"/></svg>
  <svg class="abs" style="left:1144px;top:5px" width="20" height="22" viewBox="0 0 20 22"><rect x="0.600" y="8" width="18.800" height="6" rx="0.800" fill="#22bccb"/><rect x="9.400" y="8.600" width="1.200" height="4.800" fill="#12393e"/><path d="M10 2 V4.600 M5.600 3.400 L6.800 5.300 M14.400 3.400 L13.200 5.300 M10 20 V17.400 M5.600 18.600 L6.800 16.700 M14.400 18.600 L13.200 16.700" stroke="#22bccb" stroke-width="1.100" stroke-linecap="round"/></svg>
  <svg class="abs" style="left:1184px;top:12px" width="20" height="8" viewBox="0 0 20 8"><rect x="0.600" y="1" width="18.800" height="6" rx="0.800" fill="#22bccb"/><rect x="5.400" y="2.400" width="9.200" height="3.200" rx="1.200" fill="none" stroke="#14454b" stroke-width="1"/><rect x="7.600" y="3.300" width="4.800" height="1.400" fill="#22bccb"/></svg>
  <svg class="abs" style="left:1225px;top:8px" width="18" height="16" viewBox="0 0 18 16" fill="none" stroke="#ececee" stroke-width="1.500" stroke-linecap="round" stroke-linejoin="round" stroke-width="1.500" stroke-linecap="butt" stroke-linejoin="miter"><path d="M9 0.800 V15.200 M6 4.800 H1.200 V11.200 H6 M12 4.800 H16.800 V11.200 H12"/></svg>
</div>
<div id="tl">
  <div class="maj" style="left:115px"></div><div class="rt" style="left:119.6px">00:00</div><div class="tick" style="left:140px"></div><div class="tick" style="left:164px"></div><div class="tick" style="left:188px"></div><div class="tick" style="left:213px"></div><div class="tick" style="left:237px"></div><div class="tick" style="left:261px"></div><div class="tick" style="left:286px"></div><div class="tick" style="left:310px"></div><div class="tick" style="left:334px"></div><div class="maj" style="left:358px"></div><div class="rt" style="left:362.9px">00:02</div><div class="tick" style="left:383px"></div><div class="tick" style="left:407px"></div><div class="tick" style="left:431px"></div><div class="tick" style="left:456px"></div><div class="tick" style="left:480px"></div><div class="tick" style="left:504px"></div><div class="tick" style="left:529px"></div><div class="tick" style="left:553px"></div><div class="tick" style="left:577px"></div><div class="maj" style="left:602px"></div><div class="rt" style="left:606.2px">00:04</div><div class="tick" style="left:626px"></div><div class="tick" style="left:650px"></div><div class="tick" style="left:675px"></div><div class="tick" style="left:699px"></div><div class="tick" style="left:723px"></div><div class="tick" style="left:748px"></div><div class="tick" style="left:772px"></div><div class="tick" style="left:796px"></div><div class="tick" style="left:821px"></div><div class="maj" style="left:845px"></div><div class="rt" style="left:849.5px">00:06</div><div class="tick" style="left:869px"></div><div class="tick" style="left:894px"></div><div class="tick" style="left:918px"></div><div class="tick" style="left:942px"></div><div class="tick" style="left:967px"></div><div class="tick" style="left:991px"></div><div class="tick" style="left:1015px"></div><div class="tick" style="left:1040px"></div><div class="tick" style="left:1064px"></div><div class="maj" style="left:1088px"></div><div class="rt" style="left:1092.8px">00:08</div><div class="tick" style="left:1113px"></div><div class="tick" style="left:1137px"></div><div class="tick" style="left:1161px"></div><div class="tick" style="left:1186px"></div><div class="tick" style="left:1210px"></div><div class="tick" style="left:1234px"></div>
  <div class="abs" style="left:0;top:134px;width:1254px;height:76px;background:#232325"></div>
  <div class="abs" style="left:0;top:134px;width:115px;height:76px;background:#1b1b1d"></div>
  <svg class="abs" style="left:5px;top:168px" width="12.300" height="9.300" viewBox="0 0 13 10" fill="none" stroke="#636367" stroke-width="1"><rect x="0.500" y="0.500" width="12" height="9"/><path d="M5.200 3.200 L8 5 L5.200 6.800Z" fill="#636367" stroke="none"/></svg>
  <div class="abs" style="left:42px;top:164px;width:16px;height:16px;border-radius:8px;background:#28282b"></div>
  <svg class="abs" style="left:44px;top:167px" width="12" height="10" viewBox="0 0 12 10" fill="none" stroke="#d6d6d8" stroke-width="1" stroke-linecap="round" stroke-linejoin="round"><path d="M1 3.500 H2.800 L5.200 1.300 V8.700 L2.800 6.500 H1Z"/><path d="M7 3.400 Q8 5 7 6.600 M8.800 2 Q10.600 5 8.800 8"/></svg>
  <div class="abs" style="left:71px;top:154px;width:38px;height:37px;border-radius:5px;background:#2c2c2f"></div>
  <div class="t" style="left:71px;width:38px;text-align:center;top:167px;font-size:12px;font-weight:500;color:#ececee">封面</div>
  <div class="clip" style="left:116px;width:484px;border-radius:3px 0 0 3px">
    <div class="strip"><svg class="abs" style="left:0px;top:0" width="50" height="38"><use href="#dragon" width="50" height="38"/></svg><svg class="abs" style="left:50px;top:0" width="50" height="38"><use href="#dragon" width="50" height="38"/></svg><svg class="abs" style="left:100px;top:0" width="50" height="38"><use href="#dragon" width="50" height="38"/></svg><svg class="abs" style="left:150px;top:0" width="50" height="38"><use href="#dragon" width="50" height="38"/></svg><svg class="abs" style="left:200px;top:0" width="50" height="38"><use href="#dragon" width="50" height="38"/></svg><svg class="abs" style="left:250px;top:0" width="50" height="38"><use href="#dragon" width="50" height="38"/></svg><svg class="abs" style="left:300px;top:0" width="50" height="38"><use href="#dragon" width="50" height="38"/></svg><svg class="abs" style="left:350px;top:0" width="50" height="38"><use href="#dragon" width="50" height="38"/></svg><svg class="abs" style="left:400px;top:0" width="50" height="38"><use href="#dragon" width="50" height="38"/></svg><svg class="abs" style="left:450px;top:0" width="50" height="38"><use href="#dragon" width="50" height="38"/></svg></div>
    <div class="clbl" style="left:3px;padding-left:2px">Gen-2 663807778, 7db8260e-812b-4597-5, brush_A 19.mp4</div>
    <div class="clbl" style="left:303px">00:00:04:00</div>
  </div>
  <div class="clip" style="left:600px;width:491px;border-radius:4px">
    <div class="strip" style="left:2px"><svg class="abs" style="left:0px;top:0" width="50" height="38"><use href="#dragon" width="50" height="38"/></svg><svg class="abs" style="left:50px;top:0" width="50" height="38"><use href="#dragon" width="50" height="38"/></svg><svg class="abs" style="left:100px;top:0" width="50" height="38"><use href="#dragon" width="50" height="38"/></svg><svg class="abs" style="left:150px;top:0" width="50" height="38"><use href="#dragon" width="50" height="38"/></svg><svg class="abs" style="left:200px;top:0" width="50" height="38"><use href="#dragon" width="50" height="38"/></svg><svg class="abs" style="left:250px;top:0" width="50" height="38"><use href="#dragon" width="50" height="38"/></svg><svg class="abs" style="left:300px;top:0" width="50" height="38"><use href="#dragon" width="50" height="38"/></svg><svg class="abs" style="left:350px;top:0" width="50" height="38"><use href="#dragon" width="50" height="38"/></svg><svg class="abs" style="left:400px;top:0" width="50" height="38"><use href="#dragon" width="50" height="38"/></svg><svg class="abs" style="left:450px;top:0" width="50" height="38"><use href="#dragon" width="50" height="38"/></svg></div>
    <div class="clbl" style="left:5px;padding-left:2.500px">Gen-2 663807778, 7db8260e-812b-4597-5, brush_A 19.mp4</div>
    <div class="clbl" style="left:306px">00:00:04:00</div>
  </div>
  <div class="abs" style="left:598.600px;top:135.500px;width:493.400px;height:73px;border:1.500px solid #eef3f3;border-right-width:3.400px;border-left-width:3.400px;border-radius:4px"></div>
  <div class="abs" style="left:114px;top:12px;width:2px;height:243px;background:#adadaf"></div>
  <svg class="abs" style="left:110px;top:1px" width="10" height="14" viewBox="0 0 10 14"><path d="M1 1 H9 V8.500 Q9 13 5 13 Q1 13 1 8.500Z" fill="#1b1b1d" stroke="#f6f6f8" stroke-width="1.900"/></svg>
</div>

</div>
</body>
</html>
